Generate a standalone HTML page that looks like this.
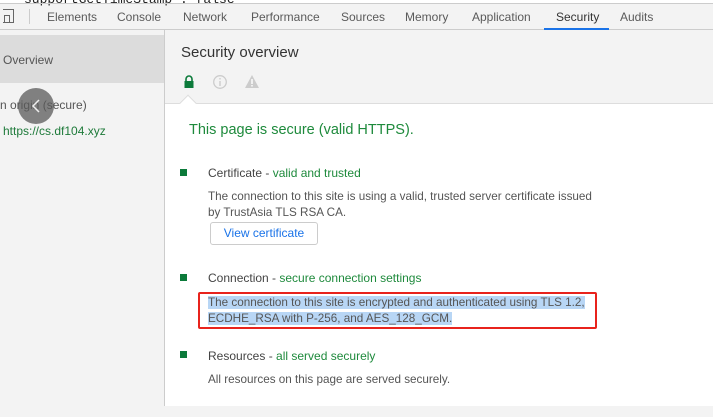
<!DOCTYPE html>
<html><head><style>
*{margin:0;padding:0;box-sizing:border-box}
body{width:713px;height:417px;overflow:hidden;background:#f3f3f3;font-family:"Liberation Sans",sans-serif;position:relative;color:#333}
.a{position:absolute}
.tab{position:absolute;top:10px;font-size:12px;color:#5a5a5a}
.g{color:#1e8a3c}
.sq{position:absolute;width:7px;height:7px;background:#0b7a3a}
.t{position:absolute;font-size:12px;color:#444}
.d{position:absolute;font-size:11.7px;color:#555;line-height:16px}
</style></head><body>
<div class="a" style="left:0;top:0;width:713px;height:3px;background:#fff"></div>
<div class="a" style="left:24px;top:-8px;font-size:13px;color:#222;font-family:'Liberation Mono',monospace">supportGetTimeStamp : false</div>
<div class="a" style="left:0;top:3px;width:713px;height:1px;background:#ccc"></div>
<div class="a" style="left:0;top:29px;width:713px;height:1px;background:#ccc"></div>
<div class="a" style="left:3px;top:9px;width:11px;height:14px;border:1.5px solid #666;border-left:none"></div>
<div class="a" style="left:4px;top:15px;width:6px;height:8px;border:1.5px solid #666"></div>
<div class="a" style="left:29px;top:9px;width:1px;height:15px;background:#ccc"></div>
<div class="tab" style="left:47px">Elements</div>
<div class="tab" style="left:117px">Console</div>
<div class="tab" style="left:183px">Network</div>
<div class="tab" style="left:251px">Performance</div>
<div class="tab" style="left:341px">Sources</div>
<div class="tab" style="left:405px">Memory</div>
<div class="tab" style="left:472px">Application</div>
<div class="tab" style="left:556px;color:#333">Security</div>
<div class="tab" style="left:620px">Audits</div>
<div class="a" style="left:544px;top:28px;width:65px;height:2px;background:#1a73e8"></div>
<div class="a" style="left:164px;top:30px;width:1px;height:376px;background:#ccc"></div>
<div class="a" style="left:0;top:35px;width:164px;height:48px;background:#dcdcdc"></div>
<div class="a" style="left:3px;top:53px;font-size:12px;color:#555">Overview</div>
<div class="a" style="left:0;top:98px;font-size:12px;color:#555">n origin (secure)</div>
<div class="a" style="left:3px;top:124px;font-size:12px;color:#1e7a3a">https://cs.df104.xyz</div>
<div class="a" style="left:18px;top:88px;width:36px;height:36px;border-radius:50%;background:rgba(90,90,90,.75)"></div>
<svg class="a" style="left:30px;top:98px" width="12" height="16"><path d="M9 2L3 8l6 6" stroke="#eee" stroke-width="1.5" fill="none"/></svg>
<div class="a" style="left:165px;top:104px;width:548px;height:302px;background:#fff"></div>
<div class="a" style="left:165px;top:103px;width:548px;height:1px;background:#ddd"></div>
<div class="a" style="left:182px;top:97px;width:12px;height:12px;background:#fff;border-left:1px solid #ddd;border-top:1px solid #ddd;transform:rotate(45deg)"></div>
<div class="a" style="left:181px;top:44px;font-size:15px;color:#333">Security overview</div>
<svg class="a" style="left:183px;top:75px" width="12" height="14"><path d="M3 6V4a3 3 0 0 1 6 0v2" stroke="#0b7a3a" stroke-width="1.6" fill="none"/><rect x="1.5" y="6" width="9" height="7" fill="#0b7a3a"/></svg>
<svg class="a" style="left:212px;top:74px" width="16" height="16"><circle cx="8" cy="8" r="6.3" stroke="#ccc" stroke-width="1.3" fill="none"/><rect x="7.3" y="7" width="1.4" height="5" fill="#ccc"/><rect x="7.3" y="4" width="1.4" height="1.5" fill="#ccc"/></svg>
<svg class="a" style="left:244px;top:74px" width="16" height="15"><path d="M8 1L15 14H1z" fill="#ccc"/><rect x="7.3" y="5" width="1.4" height="5" fill="#fff"/><rect x="7.3" y="11" width="1.4" height="1.5" fill="#fff"/></svg>
<div class="a g" style="left:189px;top:122px;font-size:14.5px">This page is secure (valid HTTPS).</div>
<div class="sq" style="left:180px;top:169px"></div>
<div class="t" style="left:208px;top:166px">Certificate - <span class="g">valid and trusted</span></div>
<div class="d" style="left:208px;top:189px">The connection to this site is using a valid, trusted server certificate issued<br>by TrustAsia TLS RSA CA.</div>
<div class="a" style="left:210px;top:222px;width:108px;height:23px;border:1px solid #ccc;border-radius:3px;background:#fff;font-size:12px;color:#1a73e8;text-align:center;line-height:21px">View certificate</div>
<div class="sq" style="left:180px;top:274px"></div>
<div class="t" style="left:208px;top:271px">Connection - <span class="g">secure connection settings</span></div>
<div class="a" style="left:198px;top:292px;width:399px;height:37px;border:2.5px solid #e8231c;border-radius:2px"></div>
<div class="d" style="left:208px;top:295px"><span style="background:#b8d6f5">The connection to this site is encrypted and authenticated using TLS 1.2,</span><br><span style="background:#b8d6f5">ECDHE_RSA with P-256, and AES_128_GCM.</span></div>
<div class="sq" style="left:180px;top:351px"></div>
<div class="t" style="left:208px;top:349px">Resources - <span class="g">all served securely</span></div>
<div class="d" style="left:208px;top:372px">All resources on this page are served securely.</div>
</body></html>
